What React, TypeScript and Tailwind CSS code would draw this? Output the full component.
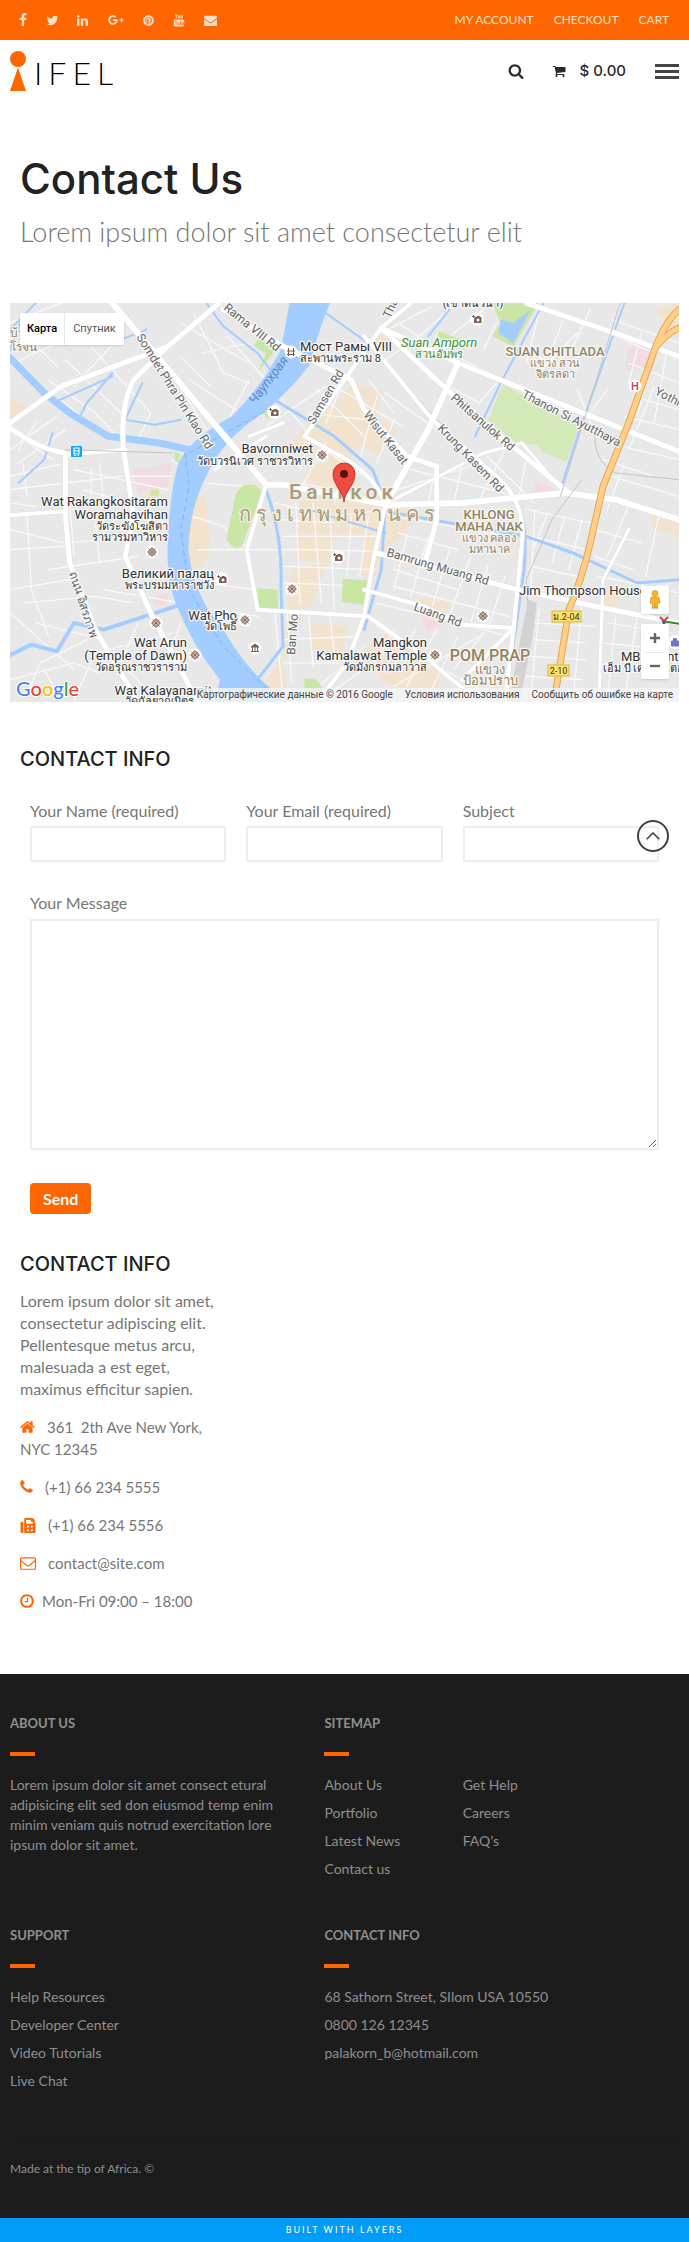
import type { ReactNode } from "react";
import { FaFax, FaGooglePlusG, FaPinterest } from "react-icons/fa";

const paths = {
  facebook:
    "M1343 12v264h-157q-86 0-116 36t-30 108v189h293l-39 296h-254v759h-306v-759h-255v-296h255v-218q0-186 104-288.5t277-102.5q147 0 228 12z",
  twitter:
    "M1684 408q-67 98-162 167 1 14 1 42 0 130-38 259.5t-115.5 248.5-184.5 210.5-258 146-323 54.5q-271 0-496-145 35 4 78 4 225 0 401-138-105-2-188-64.5t-114-159.5q33 5 61 5 43 0 85-11-112-23-185.5-111.5t-73.5-205.5v-4q68 38 146 41-66-44-105-115t-39-154q0-88 44-163 121 149 294.5 238.5t371.5 99.5q-8-38-8-74 0-134 94.5-228.5t228.5-94.5q140 0 236 102 109-21 205-78-37 115-142 178 93-10 186-50z",
  linkedin:
    "M477 625v991h-330v-991h330zm21-306q1 73-50.5 122t-135.5 49h-2q-82 0-132-49t-50-122q0-74 51.5-122.5t134.5-48.5 133 48.5 51 122.5zm1166 729v568h-329v-530q0-105-40.5-164.5t-126.5-59.5q-63 0-105.5 34.5t-63.5 85.5q-11 30-11 81v553h-329q2-399 2-647t-1-296l-1-48h329v144h-2q20-32 41-56t56.5-52 87-43.5 114.5-15.5q171 0 275 113.5t104 332.5z",
  envelope:
    "M1792 710v794q0 66-47 113t-113 47h-1472q-66 0-113-47t-47-113v-794q44 49 101 87 362 246 497 345 57 42 92.5 65.5t94.5 48 110 24.5h2q51 0 110-24.5t94.5-48 92.5-65.5q170-123 498-345 57-39 100-87zm0-294q0 79-49 151t-122 123q-376 261-468 325-10 7-42.5 31t-54 38.5-52 32.5-57.5 27-50 9h-2q-23 0-50-9t-57.5-27-52-32.5-54-38.5-42.5-31q-91-64-262-182.5t-205-142.5q-62-42-117-115.5t-55-136.5q0-78 41.5-130t118.5-52h1472q65 0 112.5 47t47.5 113z",
  search:
    "M1216 832q0-185-131.5-316.5t-316.5-131.5-316.5 131.5-131.5 316.5 131.5 316.5 316.5 131.5 316.5-131.5 131.5-316.5zm512 832q0 52-38 90t-90 38q-54 0-90-38l-343-342q-179 124-399 124-143 0-273.5-55.5t-225-150-150-225-55.5-273.5 55.5-273.5 150-225 225-150 273.5-55.5 273.5 55.5 225 150 150 225 55.5 273.5q0 220-124 399l343 343q37 37 37 90z",
  cart: "M704 1536q0 52-38 90t-90 38-90-38-38-90 38-90 90-38 90 38 38 90zm896 0q0 52-38 90t-90 38-90-38-38-90 38-90 90-38 90 38 38 90zm128-1088v512q0 24-16.5 42.5t-40.5 21.5l-1044 122q13 60 13 70 0 16-24 64h920q26 0 45 19t19 45-19 45-45 19h-1024q-26 0-45-19t-19-45q0-11 8-31.5t16-36 21.5-40 15.5-29.5l-177-823h-204q-26 0-45-19t-19-45 19-45 45-19h256q16 0 28.5 6.5t19.5 15.5 13 24.5 8 26 5.5 29.5 4.5 26h1201q26 0 45 19t19 45z",
  home: "M1472 992v480q0 26-19 45t-45 19h-384v-384h-256v384h-384q-26 0-45-19t-19-45v-480q0-1 .5-3t.5-3l575-474 575 474q1 2 1 6zm223-69l-62 74q-8 9-21 11h-3q-13 0-21-7l-692-577-692 577q-12 8-24 7-13-2-21-11l-62-74q-8-10-7-23.5t11-21.5l719-599q32-26 76-26t76 26l244 204v-195q0-14 9-23t23-9h192q14 0 23 9t9 23v408l219 182q10 8 11 21.5t-7 23.5z",
  phone:
    "M1600 1240q0 27-10 70.5t-21 68.5q-21 50-122 106-94 51-186 51-27 0-53-3.5t-57.5-12.5-47-14.5-55.5-20.5-49-18q-98-35-175-83-127-79-264-216t-216-264q-48-77-83-175-3-9-18-49t-20.5-55.5-14.5-47-12.5-57.5-3.5-53q0-92 51-186 56-101 106-122 25-11 68.5-21t70.5-10q14 0 21 3 18 6 53 76 11 19 30 54t35 63.5 31 53.5q3 4 17.5 25t21.5 35.5 7 28.5q0 20-28.5 50t-62 55-62 53-28.5 46q0 9 5 22.5t8.5 20.5 14 24 11.5 19q76 137 174 235t235 174q2 1 19 11.5t24 14 20.5 8.5 22.5 5q18 0 46-28.5t53-62 55-62 50-28.5q14 0 28.5 7t35.5 21.5 25 17.5q25 15 53.5 31t63.5 35 54 30q70 35 76 53 3 7 3 21z",
  mail: "M1664 1504v-768q-32 36-69 66-268 206-426 338-51 43-83 67t-86.5 48.5-102.5 24.5h-2q-48 0-102.5-24.5t-86.5-48.5-83-67q-158-132-426-338-37-30-69-66v768q0 13 9.5 22.5t22.5 9.5h1472q13 0 22.5-9.5t9.5-22.5zm0-1051v-24.5l-.5-13-3-12.5-5.5-9-9-7.5-14-2.5h-1472q-13 0-22.5 9.5t-9.5 22.5q0 168 147 284 193 152 401 317 6 5 35 29.5t46 37.5 44.5 31.5 50.5 27.5 43 9h2q20 0 43-9t50.5-27.5 44.5-31.5 46-37.5 35-29.5q208-165 401-317 54-43 100.5-115.5t46.5-131.5zm128-37v1088q0 66-47 113t-113 47h-1472q-66 0-113-47t-47-113v-1088q0-66 47-113t113-47h1472q66 0 113 47t47 113z",
  clock:
    "M1024 544v448q0 14-9 23t-23 9h-320q-14 0-23-9t-9-23v-64q0-14 9-23t23-9h224v-352q0-14 9-23t23-9h64q14 0 23 9t9 23zm416 352q0-148-73-273t-198-198-273-73-273 73-198 198-73 273 73 273 198 198 273 73 273-73 198-198 73-273zm224 0q0 209-103 385.5t-279.5 279.5-385.5 103-385.5-103-279.5-279.5-103-385.5 103-385.5 279.5-279.5 385.5-103 385.5 103 279.5 279.5 103 385.5z",
};

function Icon({ name, className, box = "0 0 1792 1792" }: { name: keyof typeof paths; className: string; box?: string }) {
  return (
    <svg viewBox={box} className={className} fill="currentColor" aria-hidden="true">
      <path d={paths[name]} />
    </svg>
  );
}

function YoutubeIcon() {
  return (
    <svg viewBox="0 0 12 14" className="h-[14px] w-3" fill="none" stroke="currentColor" aria-hidden="true">
      <path d="M2.3 1l1 2.2V5.4M4.3 1l-1 2.2M5.3 2.8h1.3v2.1H5.3zM8 2.3v2.6h1.5V2.3" strokeWidth="0.9" />
      <rect x="0.8" y="6.4" width="10.4" height="7" rx="1.4" fill="currentColor" stroke="none" />
      <path d="M2 8h2M3 8v4.2M4.9 9.2v2.6h1.2V9.2M7.4 7.6v4.3h1V9.6h-1M10.6 10.9v1H9.7V9.5h.9v1h-.9" stroke="#ff6600" strokeWidth="0.6" />
    </svg>
  );
}

const social: { label: string; icon: ReactNode; width: string }[] = [
  { label: "Facebook", icon: <Icon name="facebook" className="size-[14px]" />, width: "w-[30px]" },
  { label: "Twitter", icon: <Icon name="twitter" className="size-[13px]" />, width: "w-[28px]" },
  { label: "LinkedIn", icon: <Icon name="linkedin" className="size-[13px]" />, width: "w-[33px]" },
  { label: "Google Plus", icon: <FaGooglePlusG className="size-4" />, width: "w-[33px]" },
  { label: "Pinterest", icon: <FaPinterest className="size-[11px]" />, width: "w-[32px]" },
  { label: "YouTube", icon: <YoutubeIcon />, width: "w-[30px]" },
  { label: "Email", icon: <Icon name="envelope" className="size-[13px]" />, width: "w-[32px]" },
];

/* ---------- map ---------- */

type Line = [string, number];

const lanes: string[] = [
  "M0 60L120 0M0 110L60 150L200 70M90 230L200 330L250 400M130 170L260 330M190 130L330 330L300 410M0 190L70 140L110 190",
  "M150 250L250 110M120 290L230 410M400 60L560 180M430 30L500 210L560 240M400 160L470 250M420 230L540 330M380 210L460 380",
  "M510 100L640 290M450 150L560 120M560 230L500 380M0 440L110 340M20 480L130 380M0 520L130 480M0 560L260 520M40 580L30 480",
  "M0 680L130 720L290 700M0 740L130 730M40 640L50 860L90 1000M90 800L300 760M0 860L140 830M30 900L200 880L290 900M60 960L220 1010M0 930L150 1100",
  "M0 1130L150 1080L210 1110M40 1180L70 1080L180 1010M150 1190L200 1050L380 990M240 1050L340 1190M220 860L400 900",
  "M190 500L190 580M210 480L220 600M150 500L370 560M280 520L380 520M170 560L280 600M380 470L400 490",
  "M450 540L560 550M430 640L500 670L560 740M440 740L570 740L700 740L860 745M460 840L570 860M480 920L580 940M620 920L640 1190",
  "M640 300L700 390M690 400L830 520M600 370L740 250M760 250L920 370M700 330L830 350M840 230L900 330M880 270L1000 380",
  "M620 600L760 640L880 620M630 650L760 660M640 700L860 700M640 790L860 800M640 840L850 850M670 600L680 900M710 600L730 900M750 620L760 920M800 640L790 820M840 640L820 820",
  "M650 930L660 1140M700 930L710 1090M750 940L760 1050M640 1010L820 1000M640 1080L810 1080M690 1190L830 1030M740 1180L850 1080",
  "M870 90L990 10M940 120L1040 10M910 60L1050 180M960 170L1110 20M1060 170L1170 240M880 170L970 90M1000 230L1100 300L1140 240",
  "M1100 0L1200 50M1140 60L1110 140M1160 130L1330 200M1240 30L1210 180M1300 40L1270 140M1330 90L1230 220M1180 250L1310 330M1330 260L1370 390",
  "M1410 50L1568 120M1420 100L1510 150L1470 340M1450 180L1568 240M1460 280L1568 320M1440 340L1568 380M1400 420L1568 470M1390 470L1510 520M1480 90L1450 240M1510 250L1450 440M1540 140L1510 360",
  "M900 640L1170 700M910 690L1050 740M900 800L1050 860M900 850L1170 940M930 700L900 860M980 700L940 880M1030 740L990 910M1080 760L1030 940M1120 790L1080 960M1160 820L1120 980",
  "M860 900L1020 950L1170 1000M860 970L1000 1090L1150 1190M900 980L850 1090M950 980L890 1110M1000 980L930 1150M1050 1000L980 1180M1110 990L1040 1100M900 1150L1100 1000",
  "M1210 620L1360 660M1220 700L1350 740M1220 790L1330 820M1230 860L1300 870M1230 620L1220 880M1260 630L1230 730M1300 640L1270 780M1340 650L1310 800",
  "M1370 680L1480 720M1370 760L1460 800M1380 820L1568 870M1230 960L1370 970M1230 1010L1350 1020M1220 1060L1350 1070M1210 1120L1340 1130M1240 920L1220 1190M1340 910L1320 1190",
  "M1400 960L1550 990M1390 1020L1540 1040M1380 1080L1560 1100M1420 940L1400 1190M1470 940L1440 1190M1520 640L1490 820M1450 610L1400 760M1410 520L1568 580M1440 480L1400 620",
  "M910 560L1100 480M940 500L1160 570M1000 480L980 600M1060 480L1040 600M1110 450L1230 600M1160 440L1100 590M1210 470L1190 600M680 540L860 590M740 420L680 560M790 480L760 600",
  "M20 400L100 470M60 360L20 440M140 600L150 760M0 600L60 610M200 660L210 780M320 620L330 740M80 1100L120 1190M300 960L260 1080M350 1080L420 1060M400 960L360 1110",
  "M720 260L830 400M780 240L740 360M860 280L820 470M900 350L860 480M700 420L680 500M1360 20L1320 130M1400 260L1360 330",
];

const roads: Line[] = [
  ["M240 0L470 350L600 545L640 545L880 605L1060 600L1300 570L1420 590L1568 650", 6],
  ["M490 0L370 130L120 250L0 360", 5],
  ["M370 130L290 230Q260 300 265 430L290 640L270 760L330 930L400 1100L440 1197", 5],
  ["M0 375Q70 440 130 450L130 640L140 780L200 980L260 1110L300 1197", 5],
  ["M130 455L270 440M0 637L130 625", 4],
  ["M500 20L640 130L800 230L830 320L930 460L1000 490L1000 650L970 790", 5],
  ["M870 75L1050 180L1568 445", 5],
  ["M870 75L990 220L1140 390L1310 570", 5],
  ["M940 0L870 75L690 400L790 470Q860 530 880 605L850 780L830 940L790 1080L720 1197", 4],
  ["M1050 180L980 380L880 605", 6],
  ["M830 100L990 350L1140 520Q1210 600 1200 720L1180 980L1160 1197", 4],
  ["M600 545L555 740L580 920L840 940L970 1060L1100 1197", 4],
  ["M1210 0L1440 100L1568 160", 5],
  ["M860 750L1190 860L1390 915L1568 960", 5],
  ["M830 860L970 910L1060 965L1180 975M1180 975L1060 1130", 4],
  ["M1300 570L1200 420L1110 450L900 590", 3],
  ["M1450 680L1390 830L1380 1197", 3],
  ["M600 400L480 500M640 360L560 400", 3],
];

const blocks: string[] = [
  "M800 240L870 260L860 340L910 380L860 460L820 420L780 500L660 420L720 330L770 300Z",
  "M410 570L460 580L470 740L440 800L400 760Z",
  "M700 480L770 480L820 540L760 570L690 530Z",
  "M680 590L880 600L860 820L820 820L830 700L760 700L750 780L670 770Z",
  "M660 800L740 780L710 900L660 1000L640 1080L650 1180L590 1150L640 1060Z",
  "M700 960L790 970L780 1060L710 1040ZM820 1060L880 990L1020 1100L990 1197L900 1160Z",
  "M880 620L960 620L920 700L880 740ZM960 880L1040 900L1000 960L950 930Z",
  "M0 280L40 310L20 350L0 350ZM330 540L370 600L300 610ZM1500 600L1568 650L1568 700L1510 680Z",
  "M1390 870L1430 860L1420 910L1390 910ZM850 90L900 60L890 130L850 140ZM1510 20L1568 0L1568 110Z",
];

const canals: Line[] = [
  ["M320 80L260 110M240 210L180 300L160 350M240 220L100 300", 2],
  ["M460 0L500 70L580 150L610 200M740 30L850 130L990 340L1150 540", 2],
  ["M620 290L760 400L850 500L880 600L870 800L830 980", 3],
  ["M600 560Q640 700 635 850L640 1030L580 1130", 3],
  ["M1250 0L1150 240L1090 400M1440 0L1330 400L1290 560", 2],
  ["M1150 540Q1220 600 1205 800L1160 1197", 3],
  ["M900 630L1210 700L1320 750L1470 840L1568 830", 3],
  ["M0 1057L50 1025L110 1045L150 960L220 980L400 905", 4],
  ["M310 240L270 350L340 365L400 350M100 390L80 470L20 540", 2],
  ["M700 620L880 690M1030 20L980 100M0 80L60 0M0 140L30 40", 2],
];

type Label = {
  x: number;
  y: number;
  t: string;
  a?: "start" | "middle" | "end";
  c?: string;
  s?: number;
  r?: number;
  cls?: string;
};

const places: Label[] = [
  { x: 290, y: 48, t: "Мост Рамы VIII", s: 13 },
  { x: 290, y: 59, t: "สะพานพระราม 8", s: 11 },
  { x: 303, y: 150, t: "Bavornniwet", a: "end", s: 13 },
  { x: 303, y: 162, t: "วัดบวรนิเวศ ราชวรวิหาร", a: "end", s: 11 },
  { x: 158, y: 203, t: "Wat Rakangkositaram", a: "end", s: 13 },
  { x: 158, y: 216, t: "Woramahavihan", a: "end", s: 13 },
  { x: 158, y: 227, t: "วัดระฆังโฆสิตา", a: "end", s: 11 },
  { x: 158, y: 238, t: "รามวรมหาวิหาร", a: "end", s: 11 },
  { x: 204, y: 275, t: "Великий палац", a: "end", s: 13 },
  { x: 204, y: 286, t: "พระบรมมหาราชวัง", a: "end", s: 11 },
  { x: 227, y: 317, t: "Wat Pho", a: "end", s: 13 },
  { x: 227, y: 327, t: "วัดโพธิ์", a: "end", s: 11 },
  { x: 177, y: 344, t: "Wat Arun", a: "end", s: 13 },
  { x: 177, y: 357, t: "(Temple of Dawn)", a: "end", s: 13 },
  { x: 177, y: 368, t: "วัดอรุณราชวราราม", a: "end", s: 11 },
  { x: 202, y: 392, t: "Wat Kalayanamit", a: "end", s: 13 },
  { x: 184, y: 402, t: "วัดกัลยาณมิตร", a: "end", s: 11 },
  { x: 417, y: 344, t: "Mangkon", a: "end", s: 13 },
  { x: 417, y: 357, t: "Kamalawat Temple", a: "end", s: 13 },
  { x: 417, y: 368, t: "วัดมังกรกมลาวาส", a: "end", s: 11 },
  { x: 509, y: 292, t: "Jim Thompson House - Si", s: 13 },
  { x: 611, y: 358, t: "MBK Center", s: 13 },
  { x: 593, y: 369, t: "เอ็ม บี เค เซ็นเตอร์", s: 11 },
  { x: 391, y: 44, t: "Suan Amporn", s: 13, c: "#3f9337", cls: "italic" },
  { x: 429, y: 55, t: "สวนอัมพร", a: "middle", s: 11, c: "#3f9337" },
  { x: 463, y: 4, t: "(เขาดินวนา)", a: "middle", s: 11 },
  { x: 0, y: 48, t: "โรจน์", s: 12, c: "#92845f" },
  { x: 0, y: 34, t: "บ้าน", s: 12, c: "#92845f" },
];

const districts: Label[] = [
  { x: 545, y: 53, t: "SUAN CHITLADA", s: 13 },
  { x: 545, y: 64, t: "แขวง สวน", s: 11 },
  { x: 545, y: 75, t: "จิตรลดา", s: 11 },
  { x: 479, y: 216, t: "KHLONG", s: 13 },
  { x: 479, y: 228, t: "MAHA NAK", s: 13 },
  { x: 479, y: 239, t: "แขวง คลอง", s: 11 },
  { x: 479, y: 250, t: "มหานาค", s: 11 },
  { x: 480, y: 358, t: "POM PRAP", s: 16 },
  { x: 480, y: 371, t: "แขวง", s: 13 },
  { x: 480, y: 382, t: "ป้อมปราบ", s: 13 },
];

const roadNames: Label[] = [
  { x: 126, y: 34, t: "Somdet Phra Pin Klao Rd", r: 58 },
  { x: 213, y: 6, t: "Rama VIII Rd", r: 39 },
  { x: 304, y: 122, t: "Samsen Rd", r: -60 },
  { x: 353, y: 112, t: "Wisut Kasat", r: 52 },
  { x: 440, y: 96, t: "Phitsanulok Rd", r: 41 },
  { x: 427, y: 126, t: "Krung Kasem Rd", r: 46 },
  { x: 511, y: 94, t: "Thanon Si Ayutthaya", r: 27 },
  { x: 376, y: 253, t: "Bamrung Muang Rd", r: 16 },
  { x: 403, y: 307, t: "Luang Rd", r: 20 },
  { x: 285, y: 352, t: "Ban Mo", r: -86 },
  { x: 644, y: 91, t: "Yothi Alley", r: 27 },
  { x: 380, y: 16, t: "Thanon", r: -65 },
  { x: 59, y: 270, t: "ถนน อิสรภาพ", r: 72 },
];

function MapText({ l, halo = "#f7f7f7" }: { l: Label; halo?: string }) {
  return (
    <text
      x={l.x}
      y={l.y}
      textAnchor={l.a ?? "start"}
      fontSize={l.s ?? 12}
      fill={l.c ?? "#333333"}
      stroke={halo}
      strokeWidth="2.5"
      strokeLinejoin="round"
      paintOrder="stroke"
      className={l.cls}
      transform={l.r ? `rotate(${l.r} ${l.x} ${l.y})` : undefined}
    >
      {l.t}
    </text>
  );
}

function TempleMark({ x, y }: { x: number; y: number }) {
  return (
    <g transform={`translate(${x} ${y})`}>
      <circle r="6.5" fill="#fff" />
      <g fill="none" stroke="#8a6a5d">
        <circle r="3.2" strokeWidth="1.1" />
        <path d="M-5 0H5M0-5V5M-3.5-3.5L3.5 3.5M-3.5 3.5L3.5-3.5" strokeWidth="0.9" />
      </g>
      <circle r="1.2" fill="#8a6a5d" />
    </g>
  );
}

function CameraMark({ x, y }: { x: number; y: number }) {
  return (
    <g transform={`translate(${x} ${y})`}>
      <circle r="6.8" fill="#fff" />
      <path d="M-2.5-2H-.5L0-3H2.5L3-2H4.5V4H-3V0H-2.5Z" fill="#7b5f55" />
      <circle cx="1" cy="1" r="1.5" fill="#fff" />
      <path d="M-5-2.5H-2M-3.5-4V-1" stroke="#7b5f55" strokeWidth="0.9" />
    </g>
  );
}

function MapDrawing() {
  return (
    <svg
      viewBox="0 0 669 399"
      preserveAspectRatio="xMidYMid slice"
      className="block h-full w-full font-[Roboto,sans-serif]"
      role="img"
      aria-label="Map of Bangkok"
    >
      <rect width="669" height="399" fill="#e8e8e8" />
      <g transform="scale(0.42666 0.33333)" fill="none" strokeLinejoin="round" strokeLinecap="round">
        <g fill="#f1e3cd">
          {blocks.map((d) => (
            <path key={d} d={d} />
          ))}
        </g>
        <path d="M290 500L380 480L370 550L300 570ZM340 880L370 870L370 910L340 910ZM1450 130L1500 130L1500 200L1440 200ZM1230 530L1290 570L1230 570ZM960 940L1010 960L980 990Z" fill="#f1dce2" />
        <g stroke="#fafafa" strokeWidth="1.2">
          {lanes.map((d) => (
            <path key={d} d={d} vectorEffect="non-scaling-stroke" />
          ))}
        </g>
        <g fill="#c9e6a4">
          <path d="M545 548Q580 535 590 570L545 725Q530 750 507 710L530 570Z" />
          <path d="M780 828L837 832L833 905L778 898ZM580 856L628 860L628 918L583 916Z" />
          <path d="M585 105L620 145L582 207L600 150L570 128ZM590 310L615 300L640 335L600 345ZM385 445L400 455L395 480L387 475Z" />
          <path d="M1130 0L1240 0L1180 130L1130 100L1150 60ZM1005 85L1060 110L1050 130L1000 110ZM690 1125L720 1130L740 1170L690 1180ZM330 560L350 560L348 580L330 577Z" />
        </g>
        <path d="M1155 245L1335 365L1305 475L1250 450L1235 425L1190 425L1120 350Z" fill="#d3eab8" />
        <path d="M1150 50L1180 60L1220 20L1180 120L1145 90Z" fill="#a3ccff" />
        <g stroke="#a3ccff">
          {canals.map(([d, w]) => (
            <path key={d} d={d} strokeWidth={w} vectorEffect="non-scaling-stroke" />
          ))}
          <path d="M0 165L80 270L140 330L230 400L350 420L420 440" strokeWidth="7" vectorEffect="non-scaling-stroke" />
        </g>
        <path
          d="M655 0L750 0Q730 60 712 140L700 190Q640 290 560 360Q490 430 460 520Q420 620 418 740Q430 880 500 980Q560 1110 625 1170L640 1197L480 1197L492 1130Q430 1030 395 920Q365 840 370 720Q375 560 395 480Q420 410 520 340Q590 250 635 140Z"
          fill="#a3ccff"
        />
        <path d="M410 450L420 550L400 680L420 860L500 1030L620 1180M420 450L620 310" stroke="#79aef2" strokeWidth="0.8" strokeDasharray="5 4" vectorEffect="non-scaling-stroke" />
        <g stroke="#e0e0e0" strokeLinecap="butt">
          {roads.map(([d, w]) => (
            <path key={d} d={d} strokeWidth={w + 1} vectorEffect="non-scaling-stroke" />
          ))}
        </g>
        <g stroke="#ffffff">
          {roads.map(([d, w]) => (
            <path key={d} d={d} strokeWidth={w} vectorEffect="non-scaling-stroke" />
          ))}
        </g>
        <path d="M130 440L380 450M1340 530L1270 650L1210 830L1215 960M1430 0L1290 580M1370 390Q1370 480 1420 510L1568 530" stroke="#c4c4c4" strokeWidth="1" vectorEffect="non-scaling-stroke" />
        <path d="M1215 890L1235 900L1225 1000L1195 1197L1170 1197L1200 980Z" fill="#d2d2d2" />
        {["#e5a556", "#ffcf87"].map((c, i) => (
          <path
            key={c}
            d="M1568 20Q1530 60 1500 180L1450 360L1390 550L1360 720Q1340 830 1310 920L1275 1197M1568 75Q1540 90 1515 130"
            stroke={c}
            strokeWidth={i === 0 ? 7 : 5}
            vectorEffect="non-scaling-stroke"
          />
        ))}
        <path d="M1530 955L1568 962" stroke="#3b8a2a" strokeWidth="2" vectorEffect="non-scaling-stroke" />
      </g>

      {roadNames.map((l) => (
        <MapText key={l.t} l={{ ...l, c: "#666666" }} />
      ))}
      <text x="245" y="102" fontSize="13" fill="#5c87c4" className="italic" transform="rotate(-53 245 102)">
        Чаупхрая
      </text>
      {places.map((l) => (
        <MapText key={l.t} l={l} />
      ))}
      {districts.map((l) => (
        <MapText key={l.t + l.y} l={{ ...l, a: "middle", c: "#92845f", cls: "font-medium" }} />
      ))}
      <g fill="#a89b7b" stroke="#f4f0e6" strokeWidth="2.5" paintOrder="stroke" className="font-medium">
        <text x="279" y="196" fontSize="21" className="tracking-[4px]">
          Бангкок
        </text>
        <text x="229" y="218" fontSize="20" className="tracking-[5px]">
          กรุงเทพมหานคร
        </text>
      </g>

      <TempleMark x={312} y={152} />
      <TempleMark x={142} y={249} />
      <TempleMark x={282} y={286} />
      <TempleMark x={146} y={320} />
      <TempleMark x={235} y={317} />
      <TempleMark x={185} y={352} />
      <TempleMark x={425} y={352} />
      <TempleMark x={473} y={313} />
      <CameraMark x={264} y={109} />
      <CameraMark x={212} y={276} />
      <CameraMark x={328} y={254} />
      <CameraMark x={467} y={16} />
      <g transform="translate(281 49)">
        <circle r="6.5" fill="#fff" />
        <path d="M-4-1H4M-4 2.5H4M-2.5-4V4M2.5-4V4" stroke="#7b5f55" strokeWidth="1.1" />
      </g>
      <g transform="translate(245 345)">
        <circle r="6.5" fill="#fff" />
        <path d="M-4-1L0-4L4-1ZM-4 3.5H4M-2.5-1V3M0-1V3M2.5-1V3" fill="#7b5f55" stroke="#7b5f55" strokeWidth="1" />
      </g>
      <g transform="translate(625 83)">
        <circle r="6.5" fill="#fff" />
        <text y="4" fontSize="11" textAnchor="middle" fill="#d33b3b" className="font-medium">
          H
        </text>
      </g>
      <g transform="translate(61 143)">
        <rect width="11" height="11" rx="1" fill="#18a5f0" />
        <path d="M3 2H8V8H3ZM3 5H8M3 9.5H4.5M6.5 9.5H8" fill="none" stroke="#fff" strokeWidth="1.1" />
      </g>
      {[
        { x: 542, y: 308, w: 29, t: "ม.2-04" },
        { x: 538, y: 362, w: 21, t: "2-10" },
      ].map((b) => (
        <g key={b.t}>
          <rect x={b.x} y={b.y} width={b.w} height="11" fill="#ffe168" stroke="#d8b93c" />
          <text x={b.x + b.w / 2} y={b.y + 9} fontSize="9" textAnchor="middle" fill="#333">
            {b.t}
          </text>
        </g>
      ))}
      <path d="M650 314L654 318L658 314" fill="none" stroke="#e0403a" strokeWidth="2" />
      <path d="M654 318V321" stroke="#2b66c9" strokeWidth="3" />
      <g transform="translate(665 339)">
        <circle r="7" fill="#fff" />
        <path d="M-3.5-1H3.5V4H-3.5ZM-1.5-1V-3.5H1.5V-1" fill="#6b77c9" stroke="#6b77c9" />
      </g>

      <path d="M334 199C333 188 323 182 323 171A11 11 0 0 1 345 171C345 182 335 188 334 199Z" fill="#ee4b42" stroke="#b3271f" strokeWidth="0.8" />
      <circle cx="334" cy="171" r="4" fill="#5b1111" />

      <text x="6" y="393" fontSize="20" stroke="#fff" strokeWidth="2" paintOrder="stroke" className="font-[Lato,sans-serif] font-medium">
        <tspan fill="#4285f4">G</tspan>
        <tspan fill="#ea4335">o</tspan>
        <tspan fill="#fbbc05">o</tspan>
        <tspan fill="#4285f4">g</tspan>
        <tspan fill="#34a853">l</tspan>
        <tspan fill="#ea4335">e</tspan>
      </text>
    </svg>
  );
}

function MapPanel() {
  return (
    <section className="relative mx-[10px] h-[399px] overflow-hidden font-[Roboto,sans-serif]" aria-label="Map">
      <MapDrawing />
      <div className="absolute top-[10px] left-[10px] flex h-8 rounded-xs bg-white text-[11px] shadow">
        <button type="button" className="border-r border-gray-200 px-[7px] font-medium text-black">
          Карта
        </button>
        <button type="button" className="px-2 text-[#565656]">
          Спутник
        </button>
      </div>
      <div className="absolute right-[10px] bottom-[23px] flex w-7 flex-col gap-[10px]">
        <button type="button" aria-label="Street View" className="flex h-7 items-center justify-center rounded-xs bg-white shadow">
          <svg viewBox="0 0 12 20" className="h-5 w-3" aria-hidden="true">
            <ellipse cx="6" cy="18.5" rx="4" ry="1.2" fill="#ddd" />
            <circle cx="6" cy="3.5" r="3" fill="#fbb321" stroke="#d08a12" strokeWidth="0.6" />
            <path d="M2 7H10L11 13H9L8.5 18H6.5L6 14L5.5 18H3.5L3 13H1Z" fill="#fbb321" stroke="#d08a12" strokeWidth="0.6" />
          </svg>
        </button>
        <div className="flex flex-col rounded-xs bg-white shadow">
          <button type="button" aria-label="Zoom in" className="flex h-7 items-center justify-center">
            <svg viewBox="0 0 10 10" className="size-[10px]" stroke="#666" strokeWidth="2.4" aria-hidden="true">
              <path d="M0 5H10M5 0V10" />
            </svg>
          </button>
          <span className="mx-1 h-px bg-gray-200" />
          <button type="button" aria-label="Zoom out" className="flex h-[26px] items-center justify-center">
            <svg viewBox="0 0 10 10" className="size-[10px]" stroke="#666" strokeWidth="2.4" aria-hidden="true">
              <path d="M0 5H10" />
            </svg>
          </button>
        </div>
      </div>
      <div className="absolute right-0 bottom-0 flex h-[14px] items-center gap-3 bg-[#f5f5f5]/80 pr-[6px] pl-px text-[10px] leading-[14px] whitespace-nowrap text-[#444]">
        <span>Картографические данные © 2016 Google</span>
        <a href="#terms">Условия использования</a>
        <a href="#report">Сообщить об ошибке на карте</a>
      </div>
    </section>
  );
}

/* ---------- form ---------- */

function Field({ id, label, type = "text" }: { id: string; label: string; type?: string }) {
  return (
    <div className="flex flex-1 flex-col gap-[5px]">
      <label htmlFor={id} className="leading-5">
        {label}
      </label>
      <input id={id} type={type} className="h-9 w-full border-2 border-[#eeeeee] bg-white px-2 outline-none" />
    </div>
  );
}

/* ---------- footer ---------- */

function FooterBlock({ title, children }: { title: string; children: ReactNode }) {
  return (
    <section>
      <h4 className="text-[13px] leading-5 font-bold">{title}</h4>
      <div className="mt-[19px] mb-[15px] h-1 w-[25px] bg-[#ff6600]" />
      {children}
    </section>
  );
}

function LinkList({ items }: { items: string[] }) {
  return (
    <ul className="leading-7">
      {items.map((item) => (
        <li key={item}>
          <a href="#top">{item}</a>
        </li>
      ))}
    </ul>
  );
}

const contacts: { icon: ReactNode; text: string; gap: string }[] = [
  { icon: <Icon name="home" box="64 0 1664 1792" className="h-4 w-[15px]" />, text: "361\u00a0 2th Ave New York, NYC 12345", gap: "mr-3" },
  { icon: <Icon name="phone" box="192 0 1408 1792" className="h-4 w-[13px]" />, text: "(+1) 66 234 5555", gap: "mr-3" },
  { icon: <FaFax className="h-[15px] w-4" />, text: "(+1) 66 234 5556", gap: "mr-3" },
  { icon: <Icon name="mail" className="size-4" />, text: "contact@site.com", gap: "mr-3" },
  { icon: <Icon name="clock" box="128 0 1536 1792" className="h-4 w-[14px]" />, text: "Mon-Fri 09:00 – 18:00", gap: "mr-2" },
];

export default function App() {
  return (
    <div id="top" className="min-h-screen bg-white font-[Lato,sans-serif] text-[16px] text-[#777777]">
      <div className="flex h-10 items-center justify-between bg-[#ff6600] pr-5 pl-2 text-[#ffe0cc]">
        <ul className="flex items-center">
          {social.map((s) => (
            <li key={s.label} className={s.width}>
              <a href="#social" aria-label={s.label} className="flex justify-center">
                {s.icon}
              </a>
            </li>
          ))}
        </ul>
        <nav className="flex gap-5 text-[12px]">
          <a href="#account">MY ACCOUNT</a>
          <a href="#checkout">CHECKOUT</a>
          <a href="#cart">CART</a>
        </nav>
      </div>

      <header className="flex h-[62px] items-center justify-between px-[10px]">
        <a href="#home" aria-label="IFEL" className="flex items-center gap-2">
          <svg viewBox="0 0 16 40" className="h-10 w-4" fill="#ff6600" aria-hidden="true">
            <circle cx="8" cy="8" r="8" />
            <path d="M8 16.5L16 40H0Z" />
          </svg>
          <span className="pt-1 text-[32px] leading-8 font-light tracking-[6px] text-black">IFEL</span>
        </a>
        <div className="flex items-center text-[#2b2b2b]">
          <button type="button" aria-label="Search">
            <Icon name="search" className="size-4" />
          </button>
          <a href="#cart" className="ml-7 flex items-center gap-[14px] font-[Inter,sans-serif] text-[15px] font-medium">
            <Icon name="cart" className="size-[14px]" />$ 0.00
          </a>
          <button type="button" aria-label="Menu" className="ml-[29px] flex w-6 flex-col gap-[3px]">
            <span className="h-[3px] bg-[#444]" />
            <span className="h-[3px] bg-[#444]" />
            <span className="h-[3px] bg-[#444]" />
          </button>
        </div>
      </header>

      <main>
        <div className="px-5 pt-[52px] pb-[51px]">
          <h1 className="font-[Inter,sans-serif] text-[42px] leading-[50px] font-medium text-[#222]">Contact Us</h1>
          <p className="mt-2 text-[27px] leading-10 font-light">Lorem ipsum dolor sit amet consectetur elit</p>
        </div>

        <MapPanel />

        <section className="px-5 pt-[45px]">
          <h2 className="font-[Inter,sans-serif] text-[20px] leading-6 font-medium text-[#222]">CONTACT INFO</h2>
          <form className="px-[10px] pt-[30px]" onSubmit={(e) => e.preventDefault()}>
            <div className="relative flex gap-5">
              <Field id="name" label="Your Name (required)" />
              <Field id="email" label="Your Email (required)" type="email" />
              <Field id="subject" label="Subject" />
              <button
                type="button"
                aria-label="Back to top"
                className="absolute -right-[10px] bottom-[10px] flex size-8 items-center justify-center rounded-full border-2 border-[#3c4248]"
              >
                <svg viewBox="0 0 14 8" className="h-2 w-[14px]" fill="none" stroke="#3c4248" strokeWidth="1.6" aria-hidden="true">
                  <path d="M0.7 7.3L7 1L13.3 7.3" />
                </svg>
              </button>
            </div>
            <div className="mt-[31px] flex flex-col gap-[6px]">
              <label htmlFor="message" className="leading-5">
                Your Message
              </label>
              <textarea id="message" className="h-[231px] w-full resize-y border-2 border-[#eeeeee] bg-white p-2 outline-none" />
            </div>
            <button type="submit" className="mt-[33px] block h-[31px] rounded-[4px] bg-[#ff6600] px-[13px] font-bold text-white">
              Send
            </button>
          </form>
        </section>

        <section className="px-5 pt-[38px] pb-[62px]">
          <h2 className="font-[Inter,sans-serif] text-[20px] leading-6 font-medium text-[#222]">CONTACT INFO</h2>
          <div className="mt-[14px] flex max-w-[204px] flex-col gap-4 leading-[22px]">
            <p>Lorem ipsum dolor sit amet, consectetur adipiscing elit. Pellentesque metus arcu, malesuada a est eget, maximus efficitur sapien.</p>
            {contacts.map((c) => (
              <p key={c.text} className="text-[15px]">
                <span className={`inline-block align-[-2px] text-[#ff6600] ${c.gap}`}>{c.icon}</span>
                {c.text}
              </p>
            ))}
          </div>
        </section>
      </main>

      <footer className="bg-[#1c1c1c] text-[14px] text-[#8f8f8f]">
        <div className="mx-[10px] grid grid-cols-[47%_53%] gap-y-[42px] pt-[39px] pb-[43px]">
          <FooterBlock title="ABOUT US">
            <p className="max-w-[280px] pt-1 leading-5">
              Lorem ipsum dolor sit amet consect etural adipisicing elit sed don eiusmod temp enim minim veniam quis notrud exercitation lore ipsum dolor sit amet.
            </p>
          </FooterBlock>
          <FooterBlock title="SITEMAP">
            <div className="grid grid-cols-[39%_61%]">
              <LinkList items={["About Us", "Portfolio", "Latest News", "Contact us"]} />
              <LinkList items={["Get Help", "Careers", "FAQ’s"]} />
            </div>
          </FooterBlock>
          <FooterBlock title="SUPPORT">
            <LinkList items={["Help Resources", "Developer Center", "Video Tutorials", "Live Chat"]} />
          </FooterBlock>
          <FooterBlock title="CONTACT INFO">
            <LinkList items={["68 Sathorn Street, SIlom USA 10550", "0800 126 12345", "palakorn_b@hotmail.com"]} />
          </FooterBlock>
        </div>
        <p className="mx-[10px] border-t border-[#191919] pt-5 pb-[39px] text-[12px] leading-5">Made at the tip of Africa. ©</p>
        <a href="#layers" className="block h-6 bg-[#009cf7] text-center text-[9px] leading-6 tracking-[2px] text-white">
          BUILT WITH LAYERS
        </a>
      </footer>
    </div>
  );
}
